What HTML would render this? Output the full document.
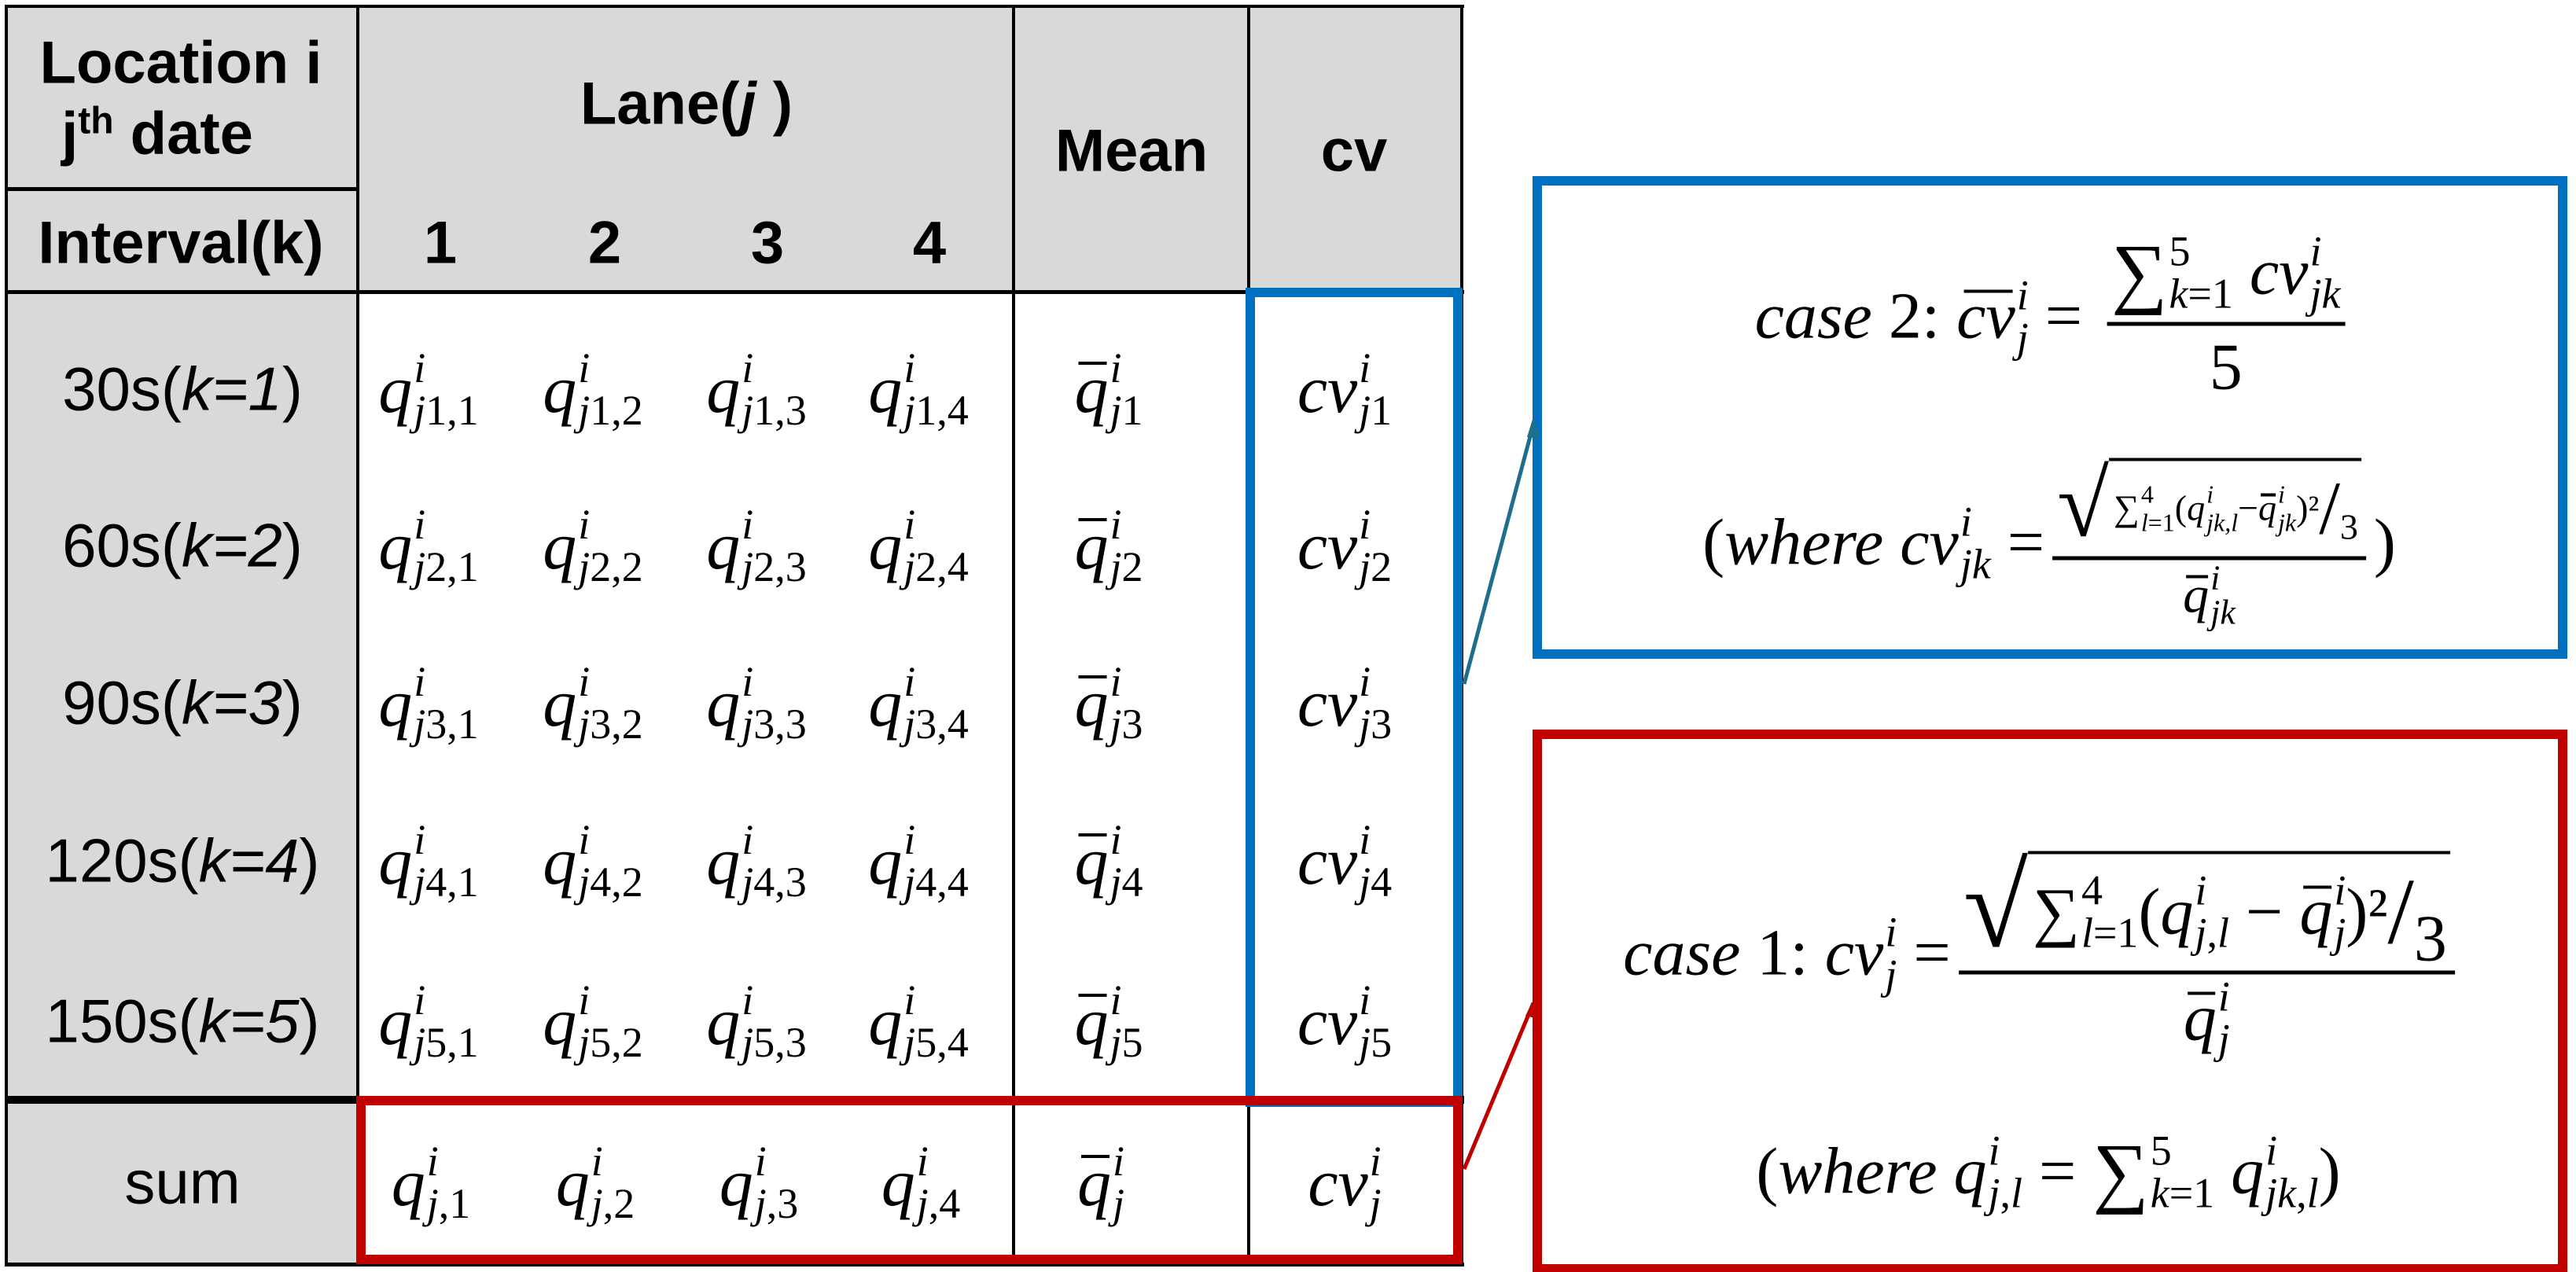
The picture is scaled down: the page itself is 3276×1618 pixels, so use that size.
<!DOCTYPE html>
<html><head><meta charset="utf-8"><style>
body{margin:0;background:#fff;}
#c{position:relative;width:3276px;height:1618px;overflow:hidden;background:#fff;font-family:"Liberation Sans",sans-serif;}
.a{position:absolute;}
.g{background:#d9d9d9;}
.ln{position:absolute;background:#000;}
.t{position:absolute;transform:translate(-50%,-50%);white-space:nowrap;}
.b{font-weight:bold;font-size:76px;}
.r{font-size:78px;}
.m{font-family:"Liberation Serif",serif;font-style:italic;font-size:86px;display:inline-flex;align-items:center;}
.ss{display:inline-flex;flex-direction:column;font-size:54px;line-height:48px;margin-left:2px;}
.ss .up{margin-bottom:6px;}
.ss .dn{font-style:italic;}
.ss .dn b{font-weight:normal;font-style:normal;}
.bar{position:relative;display:inline-block;}
.bar:before{content:"";position:absolute;left:12%;right:4%;top:0.18em;border-top:4px solid #000;}
.f{display:inline-flex;flex-direction:column;align-items:center;vertical-align:middle;margin:0 10px;}
.f .n{padding:0 6px 6px;border-bottom:5px solid #000;display:inline-flex;align-items:center;}
.f .d{padding-top:4px;display:inline-flex;align-items:center;}
.sq{display:inline-flex;align-items:flex-end;}
.sq .rt{font-style:normal;font-size:1.5em;line-height:1;}
.sq .in{border-top:4px solid #000;padding:4px 4px 0 6px;display:inline-flex;align-items:center;}
.n1{font-style:normal;}
</style></head><body><div id="c">
<div class="a g" style="left:8px;top:8px;width:1852px;height:364px"></div>
<div class="a g" style="left:8px;top:372px;width:447px;height:1236px"></div>
<div class="ln" style="left:6px;top:6px;width:1856px;height:4px"></div>
<div class="ln" style="left:6px;top:6px;width:4px;height:1604px"></div>
<div class="ln" style="left:1857px;top:6px;width:4px;height:1604px"></div>
<div class="ln" style="left:453px;top:6px;width:4px;height:1604px"></div>
<div class="ln" style="left:1287px;top:6px;width:4px;height:1604px"></div>
<div class="ln" style="left:1586px;top:6px;width:4px;height:1604px"></div>
<div class="ln" style="left:6px;top:238px;width:450px;height:5px"></div>
<div class="ln" style="left:6px;top:369px;width:1856px;height:5px"></div>
<div class="ln" style="left:6px;top:1394px;width:1856px;height:10px"></div>
<div class="ln" style="left:6px;top:1606px;width:1856px;height:5px"></div>
<div class="t b" style="left:230px;top:80px">Location i</div>
<div class="t b" style="left:200px;top:170px">j<sup style="font-size:48px">th</sup> date</div>
<div class="t b" style="left:230px;top:309px">Interval(k)</div>
<div class="t b" style="left:873px;top:132px">Lane(<i>j</i> )</div>
<div class="t b" style="left:560px;top:309px">1</div>
<div class="t b" style="left:769px;top:309px">2</div>
<div class="t b" style="left:976px;top:309px">3</div>
<div class="t b" style="left:1182px;top:309px">4</div>
<div class="t b" style="left:1439px;top:192px">Mean</div>
<div class="t b" style="left:1722px;top:192px">cv</div>
<div class="t r" style="left:232px;top:495px">30s(<i>k=1</i>)</div>
<div class="t r" style="left:232px;top:694px">60s(<i>k=2</i>)</div>
<div class="t r" style="left:232px;top:894px">90s(<i>k=3</i>)</div>
<div class="t r" style="left:232px;top:1095px">120s(<i>k=4</i>)</div>
<div class="t r" style="left:232px;top:1299px">150s(<i>k=5</i>)</div>
<div class="t r" style="left:232px;top:1504px">sum</div>

<div class="t m" style="left:545px;top:495px">q<span class="ss"><span class="up">i</span><span class="dn">j<b>1,1</b></span></span></div>
<div class="t m" style="left:754px;top:495px">q<span class="ss"><span class="up">i</span><span class="dn">j<b>1,2</b></span></span></div>
<div class="t m" style="left:962px;top:495px">q<span class="ss"><span class="up">i</span><span class="dn">j<b>1,3</b></span></span></div>
<div class="t m" style="left:1168px;top:495px">q<span class="ss"><span class="up">i</span><span class="dn">j<b>1,4</b></span></span></div>
<div class="t m" style="left:1410px;top:495px"><span class="bar">q</span><span class="ss"><span class="up">i</span><span class="dn">j<b>1</b></span></span></div>
<div class="t m" style="left:1710px;top:495px">cv<span class="ss"><span class="up">i</span><span class="dn">j<b>1</b></span></span></div>

<div class="t m" style="left:545px;top:694px">q<span class="ss"><span class="up">i</span><span class="dn">j<b>2,1</b></span></span></div>
<div class="t m" style="left:754px;top:694px">q<span class="ss"><span class="up">i</span><span class="dn">j<b>2,2</b></span></span></div>
<div class="t m" style="left:962px;top:694px">q<span class="ss"><span class="up">i</span><span class="dn">j<b>2,3</b></span></span></div>
<div class="t m" style="left:1168px;top:694px">q<span class="ss"><span class="up">i</span><span class="dn">j<b>2,4</b></span></span></div>
<div class="t m" style="left:1410px;top:694px"><span class="bar">q</span><span class="ss"><span class="up">i</span><span class="dn">j<b>2</b></span></span></div>
<div class="t m" style="left:1710px;top:694px">cv<span class="ss"><span class="up">i</span><span class="dn">j<b>2</b></span></span></div>

<div class="t m" style="left:545px;top:894px">q<span class="ss"><span class="up">i</span><span class="dn">j<b>3,1</b></span></span></div>
<div class="t m" style="left:754px;top:894px">q<span class="ss"><span class="up">i</span><span class="dn">j<b>3,2</b></span></span></div>
<div class="t m" style="left:962px;top:894px">q<span class="ss"><span class="up">i</span><span class="dn">j<b>3,3</b></span></span></div>
<div class="t m" style="left:1168px;top:894px">q<span class="ss"><span class="up">i</span><span class="dn">j<b>3,4</b></span></span></div>
<div class="t m" style="left:1410px;top:894px"><span class="bar">q</span><span class="ss"><span class="up">i</span><span class="dn">j<b>3</b></span></span></div>
<div class="t m" style="left:1710px;top:894px">cv<span class="ss"><span class="up">i</span><span class="dn">j<b>3</b></span></span></div>

<div class="t m" style="left:545px;top:1095px">q<span class="ss"><span class="up">i</span><span class="dn">j<b>4,1</b></span></span></div>
<div class="t m" style="left:754px;top:1095px">q<span class="ss"><span class="up">i</span><span class="dn">j<b>4,2</b></span></span></div>
<div class="t m" style="left:962px;top:1095px">q<span class="ss"><span class="up">i</span><span class="dn">j<b>4,3</b></span></span></div>
<div class="t m" style="left:1168px;top:1095px">q<span class="ss"><span class="up">i</span><span class="dn">j<b>4,4</b></span></span></div>
<div class="t m" style="left:1410px;top:1095px"><span class="bar">q</span><span class="ss"><span class="up">i</span><span class="dn">j<b>4</b></span></span></div>
<div class="t m" style="left:1710px;top:1095px">cv<span class="ss"><span class="up">i</span><span class="dn">j<b>4</b></span></span></div>

<div class="t m" style="left:545px;top:1299px">q<span class="ss"><span class="up">i</span><span class="dn">j<b>5,1</b></span></span></div>
<div class="t m" style="left:754px;top:1299px">q<span class="ss"><span class="up">i</span><span class="dn">j<b>5,2</b></span></span></div>
<div class="t m" style="left:962px;top:1299px">q<span class="ss"><span class="up">i</span><span class="dn">j<b>5,3</b></span></span></div>
<div class="t m" style="left:1168px;top:1299px">q<span class="ss"><span class="up">i</span><span class="dn">j<b>5,4</b></span></span></div>
<div class="t m" style="left:1410px;top:1299px"><span class="bar">q</span><span class="ss"><span class="up">i</span><span class="dn">j<b>5</b></span></span></div>
<div class="t m" style="left:1710px;top:1299px">cv<span class="ss"><span class="up">i</span><span class="dn">j<b>5</b></span></span></div>

<div class="t m" style="left:548px;top:1504px">q<span class="ss"><span class="up">i</span><span class="dn">j<b>,1</b></span></span></div>
<div class="t m" style="left:757px;top:1504px">q<span class="ss"><span class="up">i</span><span class="dn">j<b>,2</b></span></span></div>
<div class="t m" style="left:965px;top:1504px">q<span class="ss"><span class="up">i</span><span class="dn">j<b>,3</b></span></span></div>
<div class="t m" style="left:1171px;top:1504px">q<span class="ss"><span class="up">i</span><span class="dn">j<b>,4</b></span></span></div>
<div class="t m" style="left:1400px;top:1504px"><span class="bar">q</span><span class="ss"><span class="up">i</span><span class="dn">j</span></span></div>
<div class="t m" style="left:1710px;top:1504px">cv<span class="ss"><span class="up">i</span><span class="dn">j</span></span></div>

<div class="a" style="left:1584px;top:366px;width:252px;height:1018px;border:12px solid #0070c0"></div>
<div class="a" style="left:453px;top:1394px;width:1383px;height:190px;border:12px solid #c00000"></div>
<div class="a" style="left:1949px;top:224px;width:1292px;height:590px;border:12px solid #0070c0"></div>
<div class="a" style="left:1949px;top:928px;width:1292px;height:668px;border:12px solid #c00000"></div>
<svg class="a" style="left:0;top:0" width="3276" height="1618">
<line x1="1862" y1="870" x2="1950" y2="540" stroke="#1f6e8c" stroke-width="5"/>
<polygon points="1950,530 1942,556 1958,558" fill="#1f6e8c"/>
<line x1="1862" y1="1487" x2="1950" y2="1276" stroke="#c00000" stroke-width="5"/>
<polygon points="1952,1268 1940,1292 1956,1296" fill="#c00000"/>
</svg>

<div class="t m" style="left:2612px;top:402px;font-size:84px">case <span class="n1">&nbsp;2:&nbsp;</span><span class="bar">cv</span><span class="ss"><span class="up">i</span><span class="dn">j</span></span>&nbsp;<span class="n1">=</span>&nbsp;
<span class="f"><span class="n"><span class="n1" style="font-size:100px">∑</span><span class="ss"><span class="up n1">5</span><span class="dn">k<b>=1</b></span></span>&nbsp;cv<span class="ss"><span class="up">i</span><span class="dn">jk</span></span></span><span class="d n1">5</span></span></div>
<div class="t m" style="left:2606px;top:690px;font-size:84px"><span class="n1">(</span>where cv<span class="ss"><span class="up">i</span><span class="dn">jk</span></span>&nbsp;<span class="n1">=</span>
<span class="f" style="font-size:46px"><span class="n" style="border-bottom-width:5px"><span class="sq"><span class="rt" style="font-size:120px">√</span><span class="in"><span class="n1">∑</span><span class="ss" style="font-size:32px;line-height:30px"><span class="up n1">4</span><span class="dn">l<b>=1</b></span></span><span class="n1">(</span>q<span class="ss" style="font-size:32px;line-height:30px"><span class="up">i</span><span class="dn">jk,l</span></span><span class="n1">−</span><span class="bar">q</span><span class="ss" style="font-size:32px;line-height:30px"><span class="up">i</span><span class="dn">jk</span></span><span class="n1">)²</span><span class="n1" style="font-size:96px">/</span><span class="n1" style="position:relative;top:24px">3</span></span></span></span><span class="d" style="font-size:66px"><span class="bar">q</span><span class="ss" style="font-size:44px;line-height:38px"><span class="up">i</span><span class="dn">jk</span></span></span></span><span class="n1">)</span></div>

<div class="t m" style="left:2598px;top:1212px;font-size:84px">case <span class="n1">&nbsp;1:&nbsp;</span>cv<span class="ss"><span class="up">i</span><span class="dn">j</span></span>&nbsp;<span class="n1">=</span>
<span class="f"><span class="n"><span class="sq"><span class="rt" style="font-size:150px">√</span><span class="in"><span class="n1">∑</span><span class="ss"><span class="up n1">4</span><span class="dn">l<b>=1</b></span></span><span class="n1">(</span>q<span class="ss"><span class="up">i</span><span class="dn">j<b>,</b>l</span></span>&nbsp;<span class="n1">−</span>&nbsp;<span class="bar">q</span><span class="ss"><span class="up">i</span><span class="dn">j</span></span><span class="n1">)²</span><span class="n1" style="font-size:120px">/</span><span class="n1" style="position:relative;top:34px">3</span></span></span></span><span class="d"><span class="bar">q</span><span class="ss"><span class="up">i</span><span class="dn">j</span></span></span></span></div>
<div class="t m" style="left:2605px;top:1490px;font-size:84px"><span class="n1">(</span>where q<span class="ss"><span class="up">i</span><span class="dn">j<b>,</b>l</span></span>&nbsp;<span class="n1">=</span>&nbsp;<span class="n1" style="font-size:100px">∑</span><span class="ss"><span class="up n1">5</span><span class="dn">k<b>=1</b></span></span>&nbsp;q<span class="ss"><span class="up">i</span><span class="dn">jk<b>,</b>l</span></span><span class="n1">)</span></div>
</div></body></html>
